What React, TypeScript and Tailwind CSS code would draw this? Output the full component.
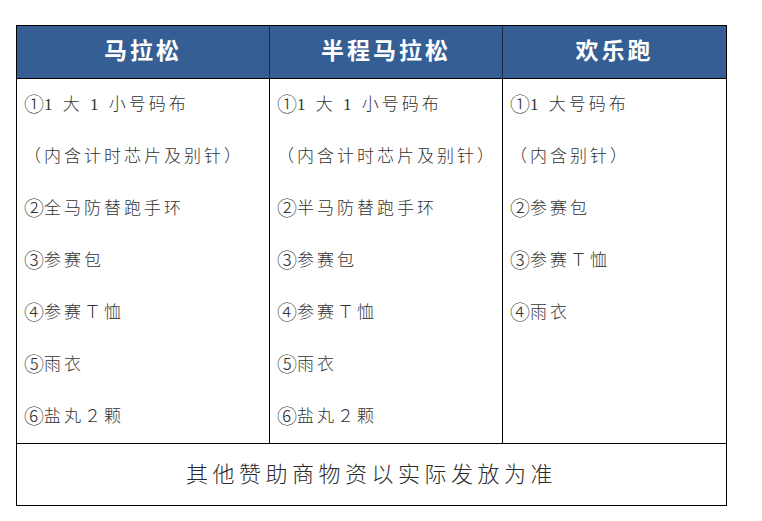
const cols = [
  {
    title: '马拉松',
    items: ['①1 大 1 小号码布', '（内含计时芯片及别针）', '②全马防替跑手环', '③参赛包', '④参赛Ｔ恤', '⑤雨衣', '⑥盐丸２颗'],
  },
  {
    title: '半程马拉松',
    items: ['①1 大 1 小号码布', '（内含计时芯片及别针）', '②半马防替跑手环', '③参赛包', '④参赛Ｔ恤', '⑤雨衣', '⑥盐丸２颗'],
  },
  {
    title: '欢乐跑',
    items: ['①1 大号码布', '（内含别针）', '②参赛包', '③参赛Ｔ恤', '④雨衣'],
  },
]

const font = { fontFamily: '"Liberation Serif", "Noto Sans CJK SC", serif' }

function Item({ text }: { text: string }) {
  const first = text.charAt(0)
  if (first >= '①' && first <= '⑥') {
    return (
      <>
        <span className="text-[20px] tracking-[0px]">{first}</span>
        {text.slice(1)}
      </>
    )
  }
  return <>{text}</>
}

export default function App() {
  return (
    <div className="w-[762px] h-[521px] bg-white pt-[25px] pl-[16px]" style={font}>
      <div className="w-[711px] border-[1.5px] border-black">
        <div className="grid grid-cols-[253px_233px_1fr] bg-[#355f94] h-[53px] border-b-[1.5px] border-black">
          {cols.map((c, i) => (
            <div
              key={c.title}
              className={`flex items-center justify-center text-white text-[23px] font-semibold tracking-[3px] ${i < 2 ? 'border-r-[1.5px] border-[#1a2a40]' : ''}`}
            >
              {c.title}
            </div>
          ))}
        </div>
        <div className="grid grid-cols-[253px_233px_1fr] border-b-[1.5px] border-black">
          {cols.map((c, i) => (
            <div key={c.title} className={`pl-[7px] ${i < 2 ? 'border-r-[1.5px] border-black' : ''}`}>
              {Array.from({ length: 7 }).map((_, j) => (
                <div key={j} className="h-[52px] flex items-center text-[17px] text-[#333] tracking-[3px] font-light whitespace-nowrap">
                  {c.items[j] ? <Item text={c.items[j]} /> : ''}
                </div>
              ))}
            </div>
          ))}
        </div>
        <div className="h-[61px] flex items-center justify-center text-[22px] text-[#2a2a2a] tracking-[4.5px] font-light">
          其他赞助商物资以实际发放为准
        </div>
      </div>
    </div>
  )
}
